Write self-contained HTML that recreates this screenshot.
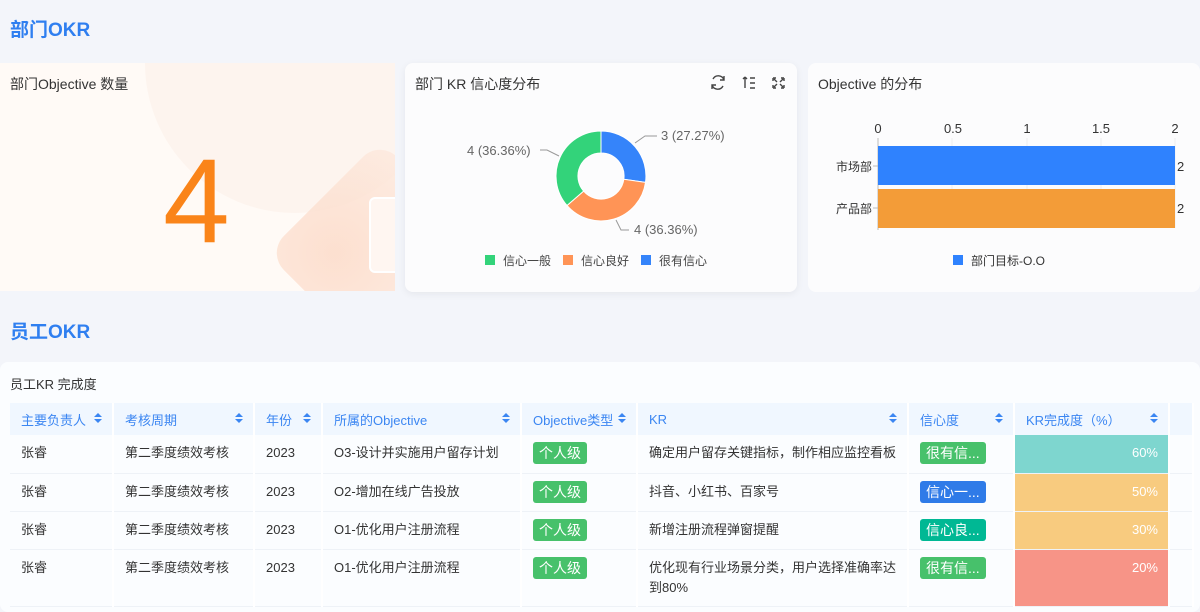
<!DOCTYPE html>
<html><head><meta charset="utf-8"><style>
*{margin:0;padding:0;box-sizing:border-box}
body{width:1200px;height:606px;overflow:hidden;background:#f3f5fa;font-family:"Liberation Sans","Noto Sans CJK SC",sans-serif;color:#333;position:relative}
.abs{position:absolute}
.h{color:#2f7ff0;font-size:19px;font-weight:bold}
.card{position:absolute;background:#fcfcfd;border-radius:8px}
.t{font-size:14px;color:#333}
table{border-collapse:collapse;font-size:13px;position:absolute;left:10px;top:403px;table-layout:fixed}
th{background:#f0f7ff;color:#3b86f2;font-weight:normal;text-align:left;height:32px;padding:0 11px;border-right:2px solid #fff;position:relative}
th i{position:absolute;right:10px;top:10px;width:0;height:0;border-left:4px solid transparent;border-right:4px solid transparent;border-bottom:4px solid #3b86f2}
th i:after{content:"";position:absolute;left:-4px;top:6px;border-left:4px solid transparent;border-right:4px solid transparent;border-top:4px solid #3b86f2}
td{height:38px;padding:0 11px;padding-top:8px;line-height:20px;border-right:2px solid #fff;border-bottom:1px solid #eef2f7;vertical-align:top;color:#333}
.tag{display:inline-block;color:#fff;font-size:14px;padding:0 6px;border-radius:3px;line-height:22px;vertical-align:top;margin-top:-1px}
.p{text-align:right;color:#fff;padding-right:10px}
</style></head><body>
<div class="abs h" style="left:10px;top:15px">部门OKR</div>
<div class="card" style="left:0;top:63px;width:395px;height:228px;background:#fffaf6;border-radius:0;overflow:hidden">
 <div class="abs" style="left:145px;top:-150px;width:300px;height:300px;border-radius:50%;background:#fdf3ec;opacity:.8"></div>
 <div class="abs" style="left:300px;top:110px;width:160px;height:160px;transform:rotate(45deg);border-radius:24px;background:radial-gradient(circle at 30% 70%,#fcd9c6,#fdeee5);opacity:.8"></div>
 <div class="abs" style="left:369px;top:134px;width:40px;height:76px;border:2px solid #fff;border-radius:6px;background:#fff6f1"></div>
 <div class="abs t" style="left:10px;top:11px">部门Objective 数量</div>
 <div class="abs" style="left:163px;top:78px;font-size:120px;color:#fa8419;line-height:120px">4</div>
</div>
<div class="card" style="left:405px;top:63px;width:392px;height:229px;box-shadow:0 2px 8px rgba(0,0,0,.06)">
 <div class="abs t" style="left:10px;top:11px">部门 KR 信心度分布</div>
</div>
<div class="card" style="left:808px;top:63px;width:392px;height:229px">
 <div class="abs t" style="left:10px;top:11px">Objective 的分布</div>
</div>
<svg class="abs" style="left:0;top:0" width="1200" height="300" font-family="Liberation Sans, Noto Sans CJK SC, sans-serif">
 <g fill="none" stroke="#444" stroke-width="1.4">
  <path d="M713 79a6 6 0 0 1 11 1M723 86a6 6 0 0 1-11-1M724 76v4h-4M712 89v-4h4"/>
  <path d="M745 77l-2 2M745 77l2 2M745 77v11M750 78h5M750 83h5M750 88h5"/>
  <path d="M773 78h3M773 78v3M784 78h-3M784 78v3M773 88h3M773 88v-3M784 88h-3M784 88v-3M774 79l3 3M783 79l-3 3M774 87l3-3M783 87l-3-3"/>
 </g>
 <path d="M601 131A45 45 0 0 1 645.5 182.4L623.8 179.3A23 23 0 0 0 601 153Z" fill="#3584fa" stroke="#fff"/>
 <path d="M645.5 182.4A45 45 0 0 1 567 205.5L583.6 191.1A23 23 0 0 0 623.8 179.3Z" fill="#ff9456" stroke="#fff"/>
 <path d="M567 205.5A45 45 0 0 1 601 131L601 153A23 23 0 0 0 583.6 191.1Z" fill="#33d37a" stroke="#fff"/>
 <g stroke="#999" fill="none"><path d="M540 150h7l12 6"/><path d="M635 143l10-7h12"/><path d="M616 220l5 10h8"/></g>
 <g fill="#666" font-size="13"><text x="467" y="155">4 (36.36%)</text><text x="661" y="140">3 (27.27%)</text><text x="634" y="234">4 (36.36%)</text></g>
 <g font-size="12" fill="#444"><rect x="485" y="255" width="10" height="10" fill="#33d37a"/><text x="503" y="265">信心一般</text>
 <rect x="563" y="255" width="10" height="10" fill="#ff9456"/><text x="581" y="265">信心良好</text>
 <rect x="641" y="255" width="10" height="10" fill="#3584fa"/><text x="659" y="265">很有信心</text></g>
 <g stroke="#eee"><path d="M952 138v90M1027 138v90M1101 138v90M1175 138v90"/></g>
 <path d="M878 138v92M873 166h5M873 208h5" stroke="#bbb"/>
 <rect x="878" y="146" width="297" height="39" fill="#2f82fe"/>
 <rect x="878" y="189" width="297" height="39" fill="#f39c38"/>
 <g font-size="13" fill="#333" text-anchor="middle"><text x="878" y="133">0</text><text x="953" y="133">0.5</text><text x="1027" y="133">1</text><text x="1101" y="133">1.5</text><text x="1175" y="133">2</text></g>
 <g font-size="12" fill="#333"><text x="836" y="171">市场部</text><text x="836" y="213">产品部</text><text x="1177" y="171" font-size="13">2</text><text x="1177" y="213" font-size="13">2</text>
 <rect x="953" y="255" width="10" height="10" fill="#2f82fe"/><text x="971" y="265">部门目标-O.O</text></g>
</svg>
<div class="abs h" style="left:10px;top:317px">员工OKR</div>
<div class="card" style="left:0;top:362px;width:1200px;height:250px;background:#fbfdff"></div>
<div class="abs t" style="left:10px;top:374px;font-size:13px">员工KR 完成度</div>
<table>
<colgroup><col style="width:103px"><col style="width:141px"><col style="width:68px"><col style="width:199px"><col style="width:116px"><col style="width:271px"><col style="width:106px"><col style="width:155px"><col style="width:14px"></colgroup>
<tr><th>主要负责人<i></i></th><th>考核周期<i></i></th><th>年份<i></i></th><th>所属的Objective<i></i></th><th>Objective类型<i></i></th><th>KR<i></i></th><th>信心度<i></i></th><th>KR完成度（%）<i></i></th><th style="padding:0"></th></tr>
<tr><td>张睿</td><td>第二季度绩效考核</td><td>2023</td><td>O3-设计并实施用户留存计划</td><td><span class="tag" style="background:#47c16b">个人级</span></td><td>确定用户留存关键指标，制作相应监控看板</td><td><span class="tag" style="background:#47c16b">很有信...</span></td><td class="p" style="background:#7ed6cf">60%</td><td></td></tr>
<tr><td>张睿</td><td>第二季度绩效考核</td><td>2023</td><td>O2-增加在线广告投放</td><td><span class="tag" style="background:#47c16b">个人级</span></td><td>抖音、小红书、百家号</td><td><span class="tag" style="background:#2f7be8">信心一...</span></td><td class="p" style="background:#f8cb7f">50%</td><td></td></tr>
<tr><td>张睿</td><td>第二季度绩效考核</td><td>2023</td><td>O1-优化用户注册流程</td><td><span class="tag" style="background:#47c16b">个人级</span></td><td>新增注册流程弹窗提醒</td><td><span class="tag" style="background:#00b894">信心良...</span></td><td class="p" style="background:#f8cb7f">30%</td><td></td></tr>
<tr><td style="height:57px">张睿</td><td>第二季度绩效考核</td><td>2023</td><td>O1-优化用户注册流程</td><td><span class="tag" style="background:#47c16b">个人级</span></td><td>优化现有行业场景分类，用户选择准确率达到80%</td><td><span class="tag" style="background:#47c16b">很有信...</span></td><td class="p" style="background:#f79487">20%</td><td></td></tr>
</table>
</body></html>
